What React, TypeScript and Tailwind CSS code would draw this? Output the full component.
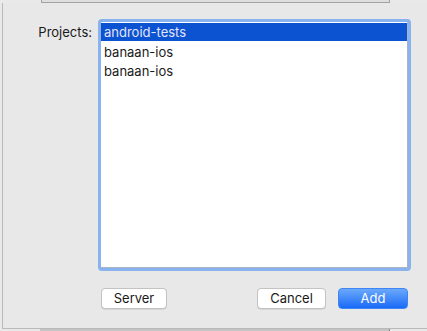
import React from 'react';

const projects = ['android-tests', 'banaan-ios', 'banaan-ios'];

export default function App() {
  const selected = 0;

  return (
    <div className="w-[427px] h-[331px] bg-[#e9e9e9] overflow-hidden flex flex-col font-['Inter','Liberation_Sans',sans-serif] text-[13px] text-[#1a1a1a] select-none">
      {/* strip of the parent window above the sheet */}
      <div className="h-[3px] shrink-0">
        <div className="ml-[41px] w-[349px] h-[3px] bg-[#dedede] border-b border-x border-[#a3a3a3]" />
      </div>

      {/* sheet body */}
      <div className="flex-1 ml-[2px] border-l border-b border-[#b9b9b9] bg-[#e8e8e8] flex flex-col pt-[16px]">
        <div className="flex items-start">
          <div className="w-[89px] text-right pr-0 pt-[4px] leading-[18px]">Projects:</div>
          <div className="ml-[6px] w-[313px] h-[252px] rounded-[4px] border-[3px] border-[#88b3ef] bg-white">
            <div className="h-full border-r border-b border-[#a9b3c3] flex flex-col gap-[1.5px] pt-[1px]">
              {projects.map((p, i) => (
                <div
                  key={i}
                  className={
                    i === selected
                      ? 'h-[18px] leading-[18px] pl-[3px] bg-[#0b53d0] text-[#e4e4fb]'
                      : 'h-[18px] leading-[18px] pl-[3px] text-[#1a1a1a]'
                  }
                >
                  {p}
                </div>
              ))}
            </div>
          </div>
        </div>

        {/* buttons */}
        <div className="flex items-center mt-[17px] pl-[98px]">
          <button className="w-[66px] h-[21px] rounded-[4px] bg-white border border-[#c3c3c3] shadow-[0_0.5px_0.5px_rgba(0,0,0,0.15)] leading-[19px]">
            Server
          </button>
          <button className="ml-[90px] w-[69px] h-[21px] rounded-[4px] bg-white border border-[#c3c3c3] shadow-[0_0.5px_0.5px_rgba(0,0,0,0.15)] leading-[19px]">
            Cancel
          </button>
          <button className="ml-[12px] w-[70px] h-[21px] rounded-[4px] bg-gradient-to-b from-[#6aa8fb] to-[#1769f7] border border-[#3f86f5] text-white leading-[19px]">
            Add
          </button>
        </div>
      </div>

      {/* parent window edge below */}
      <div className="h-[2px] shrink-0">
        <div className="ml-[40px] w-[350px] h-[2px] bg-[#c4c4c4] border-r border-[#8a8a8a]" />
      </div>
    </div>
  );
}
